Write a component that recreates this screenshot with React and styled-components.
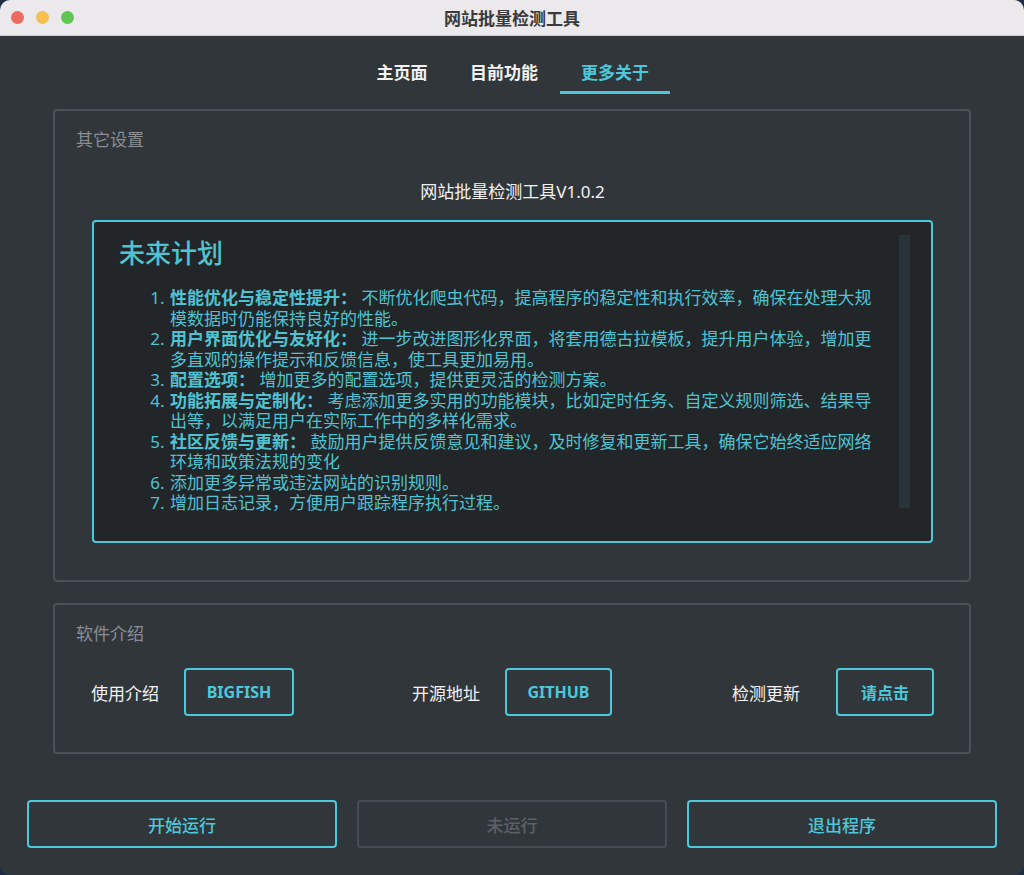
import React from "react";
import styled, { createGlobalStyle } from "styled-components";

const CYAN = "#4cc8da";
const FONT = `"Noto Sans", "Noto Sans CJK SC", sans-serif`;

const GlobalStyle = createGlobalStyle`
  html, body {
    margin: 0;
    padding: 0;
    background: #1c2d44;
  }
  body {
    font-family: ${FONT};
  }
`;

const Window = styled.div`
  width: 1024px;
  height: 875px;
  display: flex;
  flex-direction: column;
  background: #31363b;
  border-radius: 10px;
  overflow: hidden;
`;

const TitleBar = styled.div`
  height: 36px;
  flex: none;
  display: flex;
  align-items: center;
  position: relative;
  background: #ebe9eb;
  border-bottom: 1px solid #c9c9c9;
  box-sizing: border-box;
`;

const Lights = styled.div`
  display: flex;
  gap: 12px;
  padding-left: 11px;
`;

const Light = styled.span`
  width: 13px;
  height: 13px;
  border-radius: 50%;
  background: ${p => p.color};
`;

const Title = styled.div`
  position: absolute;
  left: 0;
  right: 0;
  text-align: center;
  font-size: 17px;
  font-weight: 700;
  color: #3a3a3a;
  pointer-events: none;
`;

const Tabs = styled.div`
  display: flex;
  justify-content: center;
  margin-top: 15px;
  padding-left: 2px;
`;

const Tab = styled.div`
  width: ${p => p.w}px;
  text-align: center;
  font-size: 17px;
  font-weight: 700;
  color: ${p => (p.active ? CYAN : "#f2f2f2")};
  padding: 8px 0 7px;
  border-bottom: 3px solid ${p => (p.active ? CYAN : "transparent")};
`;

const Content = styled.div`
  display: flex;
  flex-direction: column;
  padding: 15px 53px 0;
  gap: 21px;
`;

const Group = styled.div`
  border: 2px solid #4b5158;
  border-radius: 4px;
  height: ${p => p.h}px;
  box-sizing: border-box;
  padding: 18px 36px 0 21px;
  display: flex;
  flex-direction: column;
`;

const GroupTitle = styled.div`
  font-size: 17px;
  color: #8a8e93;
  line-height: 22px;
`;

const Version = styled.div`
  text-align: center;
  font-size: 17px;
  color: #f2f2f2;
  margin-top: 30px;
  padding-left: 16px;
  line-height: 22px;
`;

const Plan = styled.div`
  margin: 17px 0 0 16px;
  height: 323px;
  box-sizing: border-box;
  border: 2px solid ${CYAN};
  border-radius: 4px;
  background: #232629;
  display: flex;
  padding: 11px 21px 33px 27px;
  overflow: hidden;
`;

const PlanBody = styled.div`
  flex: 1;
  color: #4fc3d2;
`;

const PlanHeading = styled.div`
  font-size: 26px;
  line-height: 40px;
  font-weight: 500;
  margin-left: -2px;
`;

const List = styled.ol`
  margin: 15px 0 0;
  padding-left: 48px;
  font-size: 17px;
  line-height: 20.5px;
  width: 716px;
`;

const Item = styled.li`
  padding-left: 1px;
  b {
    font-weight: 700;
  }
`;

const Scroll = styled.div`
  width: 11px;
  flex: none;
  background: #29343a;
  margin-top: 2px;
`;

const LinkRow = styled.div`
  display: flex;
  align-items: center;
  margin-top: 23px;
  padding-left: 15px;
`;

const LinkLabel = styled.span`
  flex: none;
  white-space: nowrap;
  font-size: 17px;
  color: #f2f2f2;
  margin-right: ${p => p.gap || 25}px;
`;

const Outline = styled.button`
  font-family: ${FONT};
  background: transparent;
  border: 2px solid ${p => (p.disabled ? "#464c53" : CYAN)};
  border-radius: 4px;
  color: ${p => (p.disabled ? "#5c6166" : CYAN)};
  box-sizing: border-box;
  padding: 0;
  cursor: pointer;
`;

const LinkButton = styled(Outline)`
  flex: none;
  width: ${p => p.w}px;
  height: 48px;
  font-size: 16px;
  font-weight: 700;
  margin-right: ${p => p.gap}px;
`;

const Footer = styled.div`
  display: grid;
  grid-template-columns: repeat(3, 310px);
  gap: 20px;
  padding: 46px 27px 0;
`;

const BigButton = styled(Outline)`
  height: 48px;
  font-size: 17px;
  font-weight: 500;
`;

const items = [
  ["性能优化与稳定性提升：", " 不断优化爬虫代码，提高程序的稳定性和执行效率，确保在处理大规模数据时仍能保持良好的性能。"],
  ["用户界面优化与友好化：", " 进一步改进图形化界面，将套用德古拉模板，提升用户体验，增加更多直观的操作提示和反馈信息，使工具更加易用。"],
  ["配置选项：", " 增加更多的配置选项，提供更灵活的检测方案。"],
  ["功能拓展与定制化：", " 考虑添加更多实用的功能模块，比如定时任务、自定义规则筛选、结果导出等，以满足用户在实际工作中的多样化需求。"],
  ["社区反馈与更新：", " 鼓励用户提供反馈意见和建议，及时修复和更新工具，确保它始终适应网络环境和政策法规的变化"],
  ["", "添加更多异常或违法网站的识别规则。"],
  ["", "增加日志记录，方便用户跟踪程序执行过程。"]
];

export default function App() {
  return (
    <>
      <GlobalStyle />
      <Window>
        <TitleBar>
          <Lights>
            <Light color="#ec6a5e" />
            <Light color="#f4bf4f" />
            <Light color="#61c554" />
          </Lights>
          <Title>网站批量检测工具</Title>
        </TitleBar>
        <Tabs>
          <Tab w={92}>主页面</Tab>
          <Tab w={112}>目前功能</Tab>
          <Tab w={110} active>更多关于</Tab>
        </Tabs>
        <Content>
          <Group h={473}>
            <GroupTitle>其它设置</GroupTitle>
            <Version>网站批量检测工具V1.0.2</Version>
            <Plan>
              <PlanBody>
                <PlanHeading>未来计划</PlanHeading>
                <List>
                  {items.map(([head, text], i) => (
                    <Item key={i}>
                      {head && <b>{head}</b>}
                      {text}
                    </Item>
                  ))}
                </List>
              </PlanBody>
              <Scroll />
            </Plan>
          </Group>
          <Group h={151}>
            <GroupTitle>软件介绍</GroupTitle>
            <LinkRow>
              <LinkLabel>使用介绍</LinkLabel>
              <LinkButton w={110} gap={118}>BIGFISH</LinkButton>
              <LinkLabel>开源地址</LinkLabel>
              <LinkButton w={107} gap={120}>GITHUB</LinkButton>
              <LinkLabel gap={36}>检测更新</LinkLabel>
              <LinkButton w={98} gap={0}>请点击</LinkButton>
            </LinkRow>
          </Group>
        </Content>
        <Footer>
          <BigButton>开始运行</BigButton>
          <BigButton disabled>未运行</BigButton>
          <BigButton>退出程序</BigButton>
        </Footer>
      </Window>
    </>
  );
}
